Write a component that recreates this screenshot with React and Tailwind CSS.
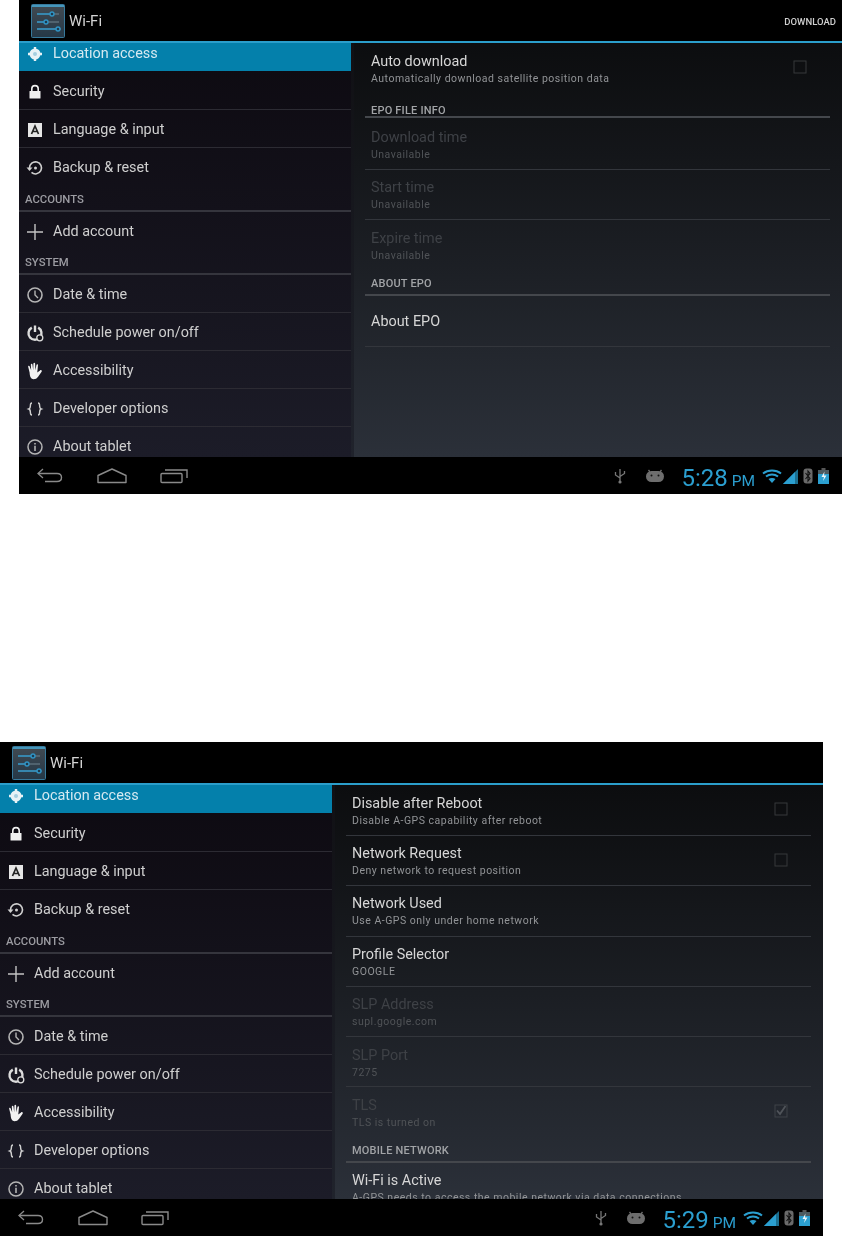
import React from "react";

const sans = { fontFamily: "Roboto, 'Open Sans', sans-serif" };

function SlidersLogo() {
  return (
    <svg width="34" height="34" viewBox="0 0 34 34" className="shrink-0">
      <defs>
        <linearGradient id="logoBg" x1="0" y1="0" x2="0" y2="1">
          <stop offset="0" stopColor="#414a52" />
          <stop offset="1" stopColor="#253847" />
        </linearGradient>
      </defs>
      <rect x="0.5" y="0.5" width="33" height="33" rx="1" fill="url(#logoBg)" stroke="#37799b" />
      <rect x="1" y="1" width="32" height="2" fill="#4596bb" />
      <path d="M6 10h22M6 18h22M6 25h24" stroke="#6f8490" strokeWidth="1.200" />
      <g stroke="#2f93c4" strokeWidth="1.400" fill="#1d3a4e">
        <path d="M6 10h14M6 18h9M6 25h20" fill="none" />
        <circle cx="21" cy="10" r="2" />
        <circle cx="15" cy="18" r="2" />
        <circle cx="27" cy="25" r="2" />
      </g>
    </svg>
  );
}

function RowIcon({ name }) {
  const c = "#d0d0d0";
  const common = { width: 18, height: 18, viewBox: "0 0 18 18", className: "shrink-0" };
  if (name === "location")
    return (
      <svg {...common}>
        <circle cx="9" cy="9" r="5.500" fill="#e8f2f6" />
        <circle cx="9" cy="9" r="2" fill="#a5cfe0" />
        <path d="M9 2v2M9 14v2M2 9h2M14 9h2" stroke="#e8f2f6" strokeWidth="2.400" />
      </svg>
    );
  if (name === "lock")
    return (
      <svg {...common}>
        <path d="M5.800 8V5.800a3.200 3.200 0 0 1 6.400 0V8" fill="none" stroke="#f0f0f0" strokeWidth="1.600" />
        <rect x="3.500" y="8" width="11" height="7.500" rx="0.500" fill="#f0f0f0" />
      </svg>
    );
  if (name === "language")
    return (
      <svg {...common}>
        <rect x="2" y="2" width="14" height="14" fill="#e6e6e6" />
        <path d="M5.500 13 9 5l3.500 8M6.800 10.500h4.400" fill="none" stroke="#222" strokeWidth="1.700" />
      </svg>
    );
  if (name === "backup")
    return (
      <svg {...common}>
        <path d="M3.500 9a6 6 0 1 1 2 4.400" fill="none" stroke={c} strokeWidth="1.600" />
        <path d="M0.500 8.500h6L3.500 12z" fill={c} />
        <circle cx="9.500" cy="9" r="1.500" fill={c} />
      </svg>
    );
  if (name === "plus")
    return (
      <svg {...common}>
        <path d="M9 1v16M1 9h16" stroke="#c4c4c4" strokeWidth="1.400" />
      </svg>
    );
  if (name === "clock")
    return (
      <svg {...common}>
        <circle cx="9" cy="9" r="7" fill="none" stroke="#b4b4b4" strokeWidth="1.600" />
        <path d="M9 4.500V9l3 3" fill="none" stroke="#b4b4b4" strokeWidth="1.400" />
      </svg>
    );
  if (name === "power")
    return (
      <svg {...common}>
        <path d="M5.800 3.600a6.500 6.500 0 1 0 6.400 0" fill="none" stroke="#dcdcdc" strokeWidth="2.400" />
        <path d="M9 1.500V8" stroke="#dcdcdc" strokeWidth="2.400" />
        <circle cx="13.800" cy="13.800" r="3" fill="#15141c" stroke="#dcdcdc" strokeWidth="1.300" />
      </svg>
    );
  if (name === "hand")
    return (
      <svg width="18" height="18" viewBox="2.500 1.200 13 15" className="shrink-0">
        <path
          d="M4.500 10 3.300 5.200c-.2-.9 1-1.200 1.300-.3L5.800 8 5.500 3.400c0-1 1.300-1 1.400 0L7.500 8l.2-5.500c0-1 1.400-1 1.400 0L9.300 8l.9-4.400c.2-.9 1.400-.7 1.300.2L10.900 10l2.300-1.800c.9-.7 2 .3 1.300 1.200l-2.900 4c-1 1.400-2.200 2.100-3.800 2.100-2 0-3.100-1.500-3.300-5.500z"
          fill="#f2f2f2"
        />
      </svg>
    );
  if (name === "braces")
    return (
      <svg {...common}>
        <path
          d="M6 3C4.400 3 4.400 4 4.400 5.500S4.400 8.500 2.800 9c1.600.5 1.600 2 1.600 3.500S4.400 15 6 15M12 3c1.600 0 1.600 1 1.600 2.500s0 3 1.600 3.500c-1.600.5-1.600 2-1.600 3.500s0 2.500-1.600 2.500"
          fill="none"
          stroke="#d0d0d0"
          strokeWidth="1.400"
        />
      </svg>
    );
  return (
    <svg {...common}>
      <circle cx="9" cy="9" r="7" fill="none" stroke="#b4b4b4" strokeWidth="1.500" />
      <path d="M9 7.800V13M9 5v1.500" stroke="#b4b4b4" strokeWidth="1.600" />
    </svg>
  );
}

function SideRow({ icon, label, active, last }) {
  return (
    <div
      className={
        "flex items-center shrink-0 pl-[7px] gap-[9px] text-[14.4px] " +
        (active ? "h-[36px] pt-[1px] bg-[#0480ab] text-[#d5e9f1]" : "h-[38px] pt-[2px] text-[#cfcfcf]") +
        (last ? "" : " border-b border-[#2c2b33]")
      }
    >
      <RowIcon name={icon} />
      <span>{label}</span>
    </div>
  );
}

function SideHeader({ label, h }) {
  return (
    <div className={"flex items-end pb-[5px] shrink-0 pl-[6px] text-[11.3px] leading-[11px] font-medium text-[#9c9ca2] border-b-2 border-[#35353d] " + h}>
      {label}
    </div>
  );
}

function Sidebar() {
  return (
    <div className="w-[332px] shrink-0 overflow-hidden bg-gradient-to-b from-[#0d0a11] to-[#1c1c28]">
      <div className="-mt-[8px] flex flex-col">
        <SideRow icon="location" label="Location access" active last />
        <div className="h-[1px] shrink-0" />
        <SideRow icon="lock" label="Security" />
        <SideRow icon="language" label="Language & input" />
        <SideRow icon="backup" label="Backup & reset" last />
        <SideHeader label="ACCOUNTS" h="h-[26px]" />
        <SideRow icon="plus" label="Add account" last />
        <SideHeader label="SYSTEM" h="h-[25px]" />
        <SideRow icon="clock" label="Date & time" />
        <SideRow icon="power" label="Schedule power on/off" />
        <SideRow icon="hand" label="Accessibility" />
        <SideRow icon="braces" label="Developer options" />
        <SideRow icon="info" label="About tablet" last />
      </div>
    </div>
  );
}

function Checkbox({ checked, dim }) {
  return (
    <svg width="14" height="14" viewBox="0 0 14 14" className="absolute right-[23px] top-[17px]">
      <rect x="1" y="1" width="12" height="12" fill="none" stroke={dim ? "#3f4348" : "#36383b"} />
      {checked && <path d="M3 6.500 6 10l5.500-8" fill="none" stroke="#50545a" strokeWidth="1.800" />}
    </svg>
  );
}

function Pref({ title, sub, disabled, check, line = true, h = "h-[50.3px]", pt = "pt-[9px]" }) {
  return (
    <div className={"relative shrink-0 pl-[6px] " + pt + " " + h + (line ? " border-b border-[#33363c]" : "")}>
      <div className={"text-[14.4px] leading-[18px] " + (disabled ? "text-[#3e4146]" : "text-[#d6d6d6]")}>{title}</div>
      {sub && (
        <div className={"text-[10.5px] leading-[16px] tracking-[0.5px] " + (disabled ? "text-[#505357]" : "text-[#929497]")}>
          {sub}
        </div>
      )}
      {check && <Checkbox checked={check === "on"} dim={disabled} />}
    </div>
  );
}

function PrefHeader({ label, h, pb }) {
  return (
    <div className={"flex items-end pl-[6px] shrink-0 text-[11px] leading-[11px] font-medium tracking-[0.2px] text-[#a2a4a7] border-b-2 border-[#44474c] " + h + " " + pb}>
      {label}
    </div>
  );
}

function BackIcon() {
  return (
    <svg width="26" height="16" viewBox="0 0 26 16" className="shrink-0">
      <path d="M6 1 1 5.500 6 10" fill="none" stroke="#8a8a8a" strokeWidth="1.300" />
      <path d="M1.500 5.500H20c3 0 4.500 1.800 4.500 4s-1.500 4-4.500 4H8" fill="none" stroke="#8a8a8a" strokeWidth="1.400" />
    </svg>
  );
}

function HomeIcon() {
  return (
    <svg width="30" height="16" viewBox="0 0 30 16" className="shrink-0">
      <path d="M1 14.500V7.500L15 1l14 6.500v7z" fill="none" stroke="#8a8a8a" strokeWidth="1.400" strokeLinejoin="round" />
    </svg>
  );
}

function RecentIcon() {
  return (
    <svg width="28" height="16" viewBox="0 0 28 16" className="shrink-0">
      <rect x="1" y="5.500" width="21" height="9" rx="1" fill="none" stroke="#8a8a8a" strokeWidth="1.400" />
      <path d="M5 2h22v8" fill="none" stroke="#8a8a8a" strokeWidth="1.400" />
    </svg>
  );
}

function StatusIcons({ time }) {
  return (
    <div className="ml-auto flex items-center pr-[13px] pt-[1px]">
      <svg width="12" height="16" viewBox="0 0 12 16" className="shrink-0">
        <path d="M6 1v13M1.500 4v3l4.500 3M10.500 3v2.500L6 8.500" fill="none" stroke="#777" strokeWidth="1.300" />
        <circle cx="6" cy="14" r="1.600" fill="#777" />
      </svg>
      <svg width="20" height="14" viewBox="0 0 20 14" className="ml-[19px] shrink-0">
        <path d="M5 3 3.500 1M15 3l1.500-2" stroke="#6e6e6e" strokeWidth="1.300" />
        <rect x="1" y="2" width="18" height="11" rx="5.500" fill="#6e6e6e" />
        <circle cx="6.500" cy="6.500" r="1" fill="#111" />
        <circle cx="13.500" cy="6.500" r="1" fill="#111" />
      </svg>
      <div className="ml-[16px] mt-[3px] flex items-baseline text-[#2b9fd0] leading-none">
        <span className="text-[24px]">{time}</span>
        <span className="ml-[4px] text-[15.5px]">PM</span>
      </div>
      <svg width="20" height="14" viewBox="0 0 20 14" className="ml-[7px] shrink-0">
        <path d="M1 4.500C6 .5 14 .5 19 4.500" fill="none" stroke="#2b9fd0" strokeWidth="2" />
        <path d="M4 7.500c3.500-2.800 8.500-2.800 12 0" fill="none" stroke="#2b9fd0" strokeWidth="2" />
        <path d="M6.500 10c2-1.500 5-1.500 7 0L10 14z" fill="#2b9fd0" />
      </svg>
      <svg width="15" height="15" viewBox="0 0 15 15" className="ml-[1px] shrink-0">
        <path d="M15 0v15H0z" fill="#1b6f90" />
        <path d="M12 3v12H0z" fill="#2b9fd0" />
      </svg>
      <svg width="10" height="16" viewBox="0 0 10 16" className="ml-[5px] shrink-0">
        <rect x="0.500" y="0.500" width="9" height="15" rx="3" fill="#6a6a6a" />
        <path d="M2.500 5 7 10.500 5 13V3l2 2.500L2.500 11" fill="none" stroke="#111" strokeWidth="1.100" />
      </svg>
      <svg width="11" height="16" viewBox="0 0 11 16" className="ml-[5px] shrink-0">
        <rect x="3.500" y="0" width="4" height="2" fill="#555" />
        <rect x="0" y="2" width="11" height="14" fill="#2b9fd0" />
        <rect x="0" y="2" width="11" height="4" fill="#4b5a60" />
        <path d="M6.500 3.500 3.500 9H6l-1 4 3.500-5.500H6z" fill="#eef6f9" />
      </svg>
    </div>
  );
}

function Screen({ time, action, children, className }) {
  return (
    <div className={"w-[823px] h-[494px] flex flex-col overflow-hidden bg-black blur-[0.4px] " + className} style={sans}>
      <div className="h-[43px] shrink-0 flex items-center pl-[12px] pr-[6px] border-b-2 border-[#2b9ecb]">
        <SlidersLogo />
        <span className="ml-[4px] mt-[2px] text-[15px] text-[#d4d4d4]">Wi-Fi</span>
        {action && <span className="ml-auto mt-[3px] text-[9.5px] font-medium text-[#d0d0d0]">{action}</span>}
      </div>
      <div className="flex-1 min-h-0 flex">
        <Sidebar />
        <div className="w-[3px] shrink-0 bg-gradient-to-b from-[#101014] to-[#20232c]" />
        <div className="flex-1 min-w-0 overflow-hidden pl-[11px] pr-[12px] bg-gradient-to-b from-[#0c0d0f] to-[#2b3039]">
          <div className="flex flex-col">{children}</div>
        </div>
      </div>
      <div className="h-[37px] shrink-0 flex items-center pl-[18px] bg-black">
        <BackIcon />
        <div className="w-[34px] shrink-0" />
        <HomeIcon />
        <div className="w-[33px] shrink-0" />
        <RecentIcon />
        <StatusIcons time={time} />
      </div>
    </div>
  );
}

export default function App() {
  return (
    <div className="w-[842px] h-[1236px] bg-white flex flex-col justify-between overflow-hidden">
      <Screen time="5:28" action="DOWNLOAD" className="ml-[19px]">
        <Pref title="Auto download" sub="Automatically download satellite position data" check="off" line={false} h="h-[50px]" pt="pt-[10px]" />
        <PrefHeader label="EPO FILE INFO" h="h-[25px]" pb="pb-[0px]" />
        <Pref title="Download time" sub="Unavailable" disabled h="h-[52px]" pt="pt-[11px]" />
        <Pref title="Start time" sub="Unavailable" disabled h="h-[50px]" />
        <Pref title="Expire time" sub="Unavailable" disabled line={false} h="h-[50px]" pt="pt-[10px]" />
        <PrefHeader label="ABOUT EPO" h="h-[26px]" pb="pb-[5px]" />
        <div className="h-[51px] shrink-0 flex items-center pl-[6px] pt-[2px] text-[14.4px] text-[#d6d6d6] border-b border-[#33363c]">
          About EPO
        </div>
      </Screen>
      <Screen time="5:29">
        <Pref title="Disable after Reboot" sub="Disable A-GPS capability after reboot" check="off" h="h-[51px]" pt="pt-[10px]" />
        <Pref title="Network Request" sub="Deny network to request position" check="off" />
        <Pref title="Network Used" sub="Use A-GPS only under home network" />
        <Pref title="Profile Selector" sub="GOOGLE" />
        <Pref title="SLP Address" sub="supl.google.com" disabled />
        <Pref title="SLP Port" sub="7275" disabled pt="pt-[10px]" />
        <Pref title="TLS" sub="TLS is turned on" disabled check="on" line={false} h="h-[50px]" pt="pt-[10px]" />
        <PrefHeader label="MOBILE NETWORK" h="h-[26px]" pb="pb-[5px]" />
        <Pref title="Wi-Fi is Active" sub="A-GPS needs to access the mobile network via data connections" line={false} pt="pt-[9px]" />
      </Screen>
    </div>
  );
}
